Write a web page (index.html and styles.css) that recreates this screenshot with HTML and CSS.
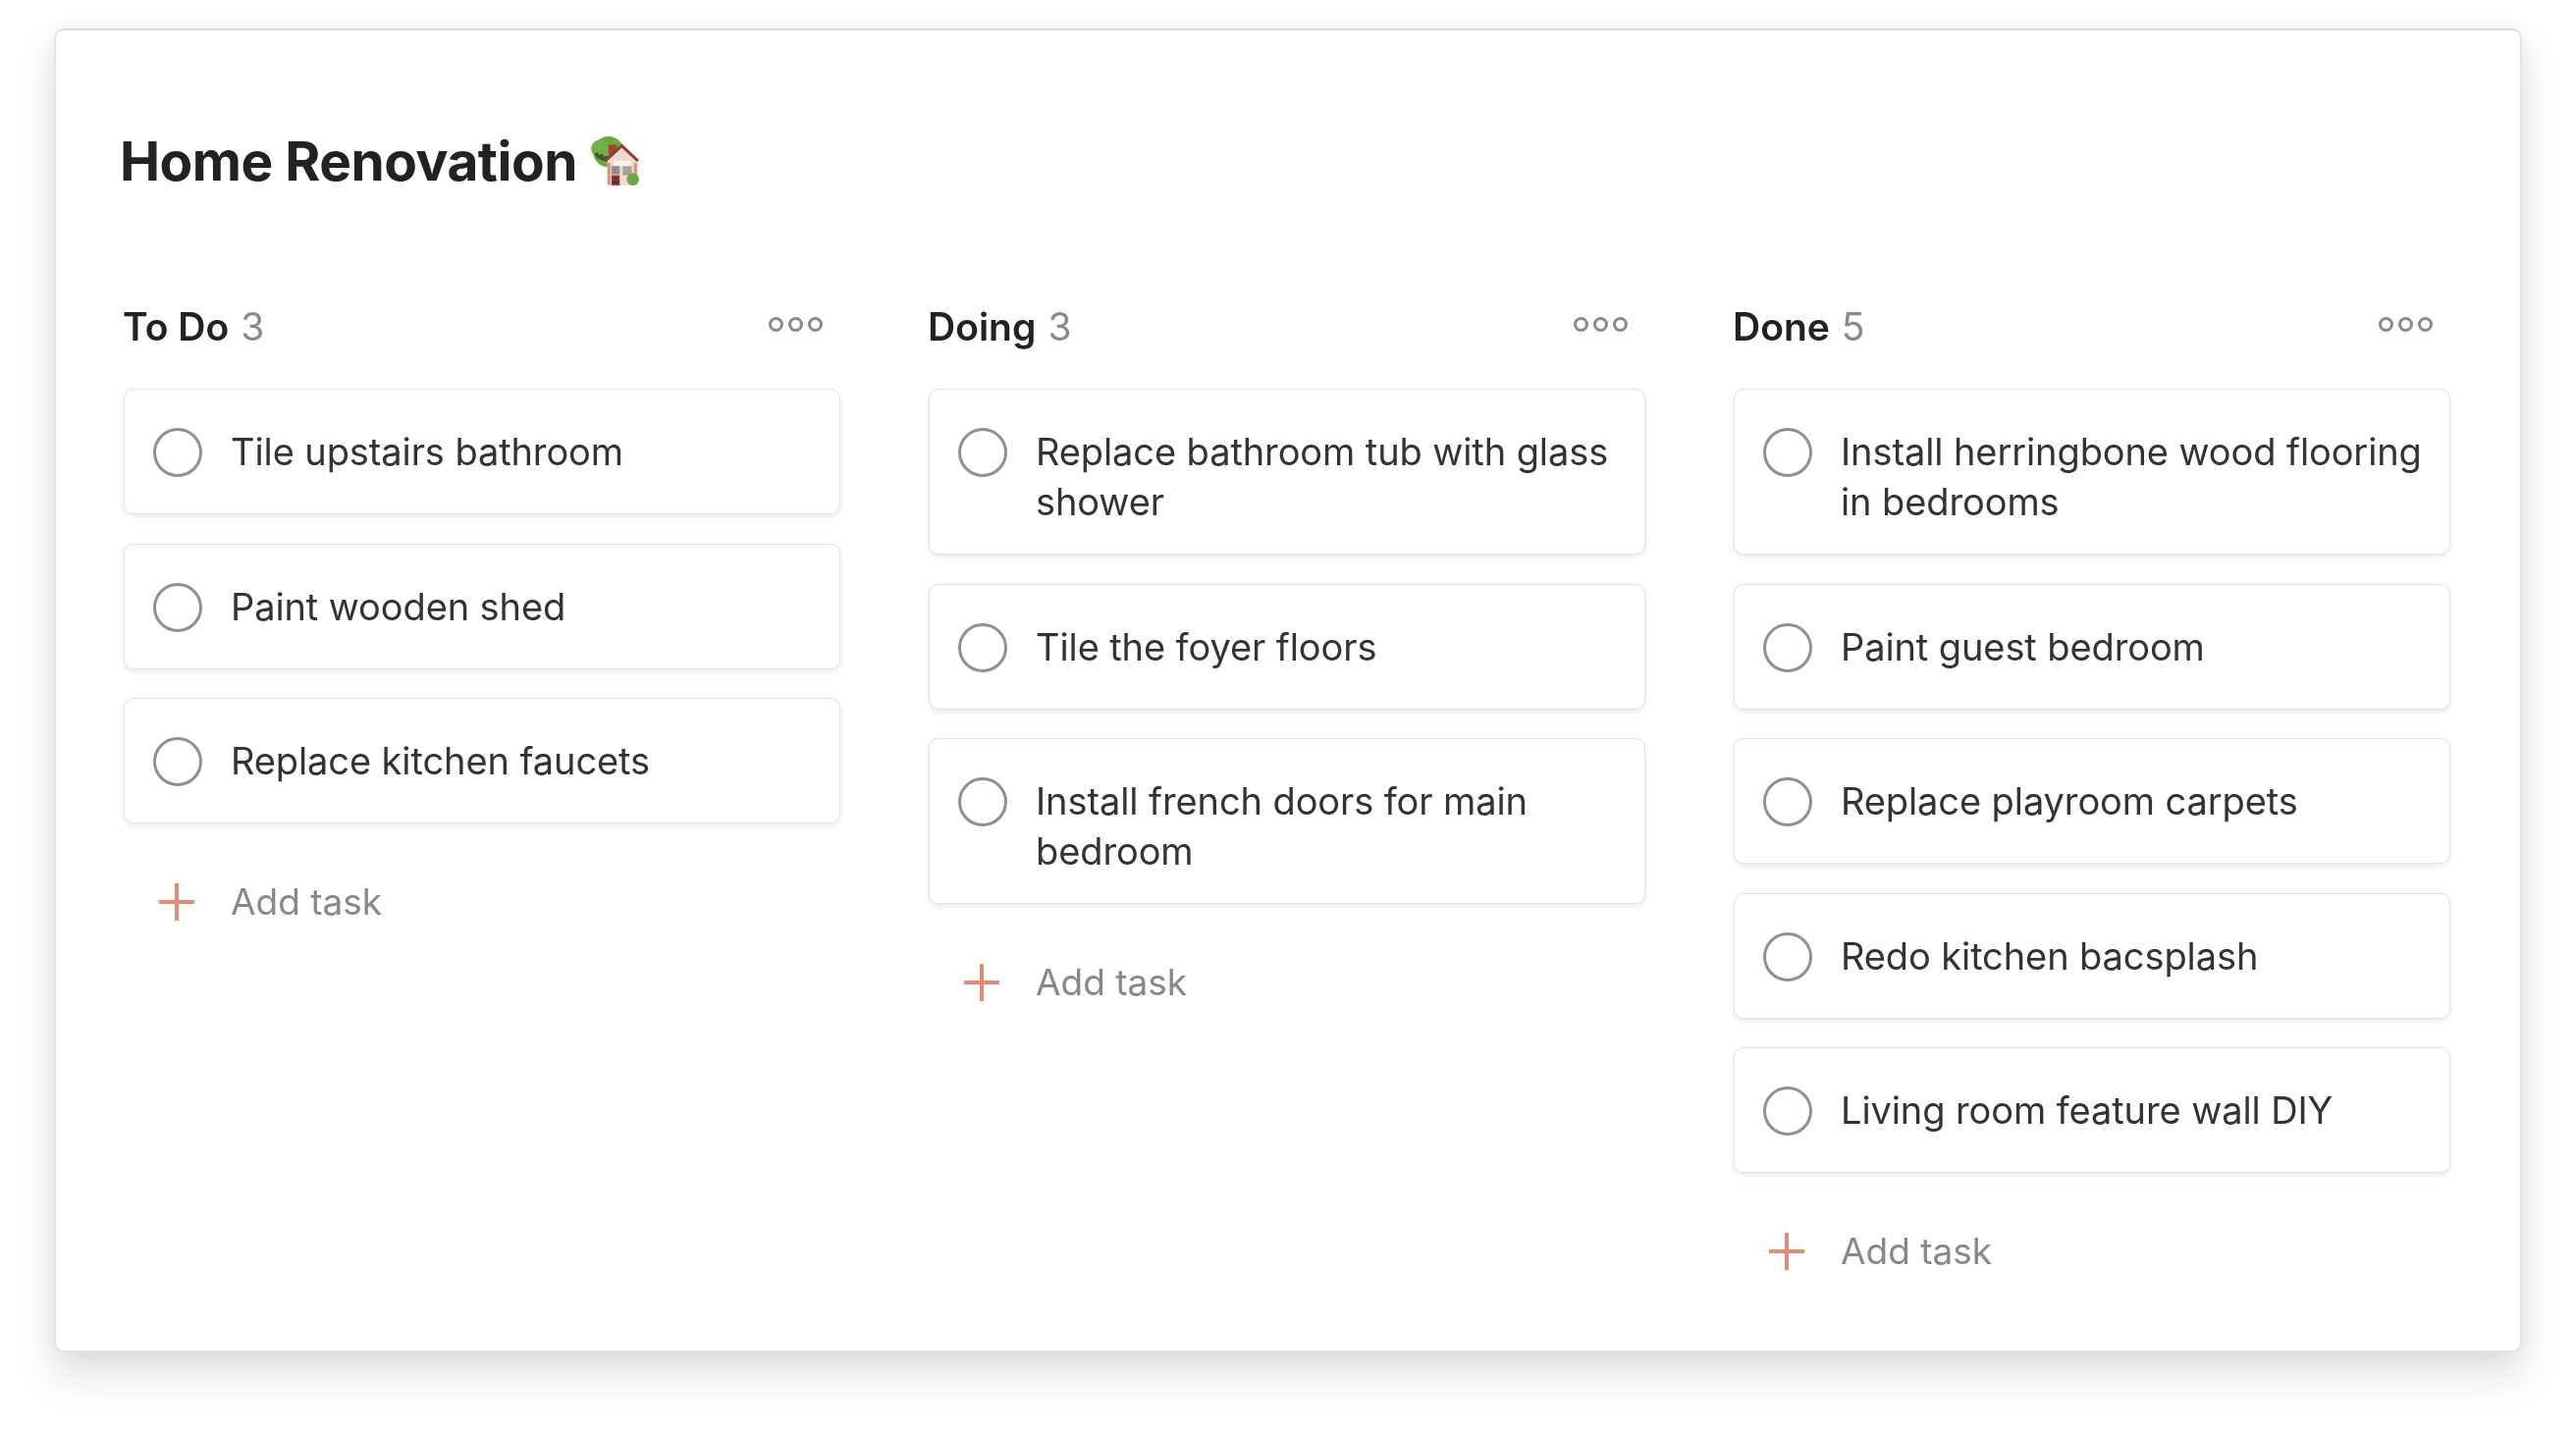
FILE: index.html
```html
<!DOCTYPE html>
<html>
  <head>
    <meta charset="UTF-8" />
    <title>Home Renovation</title>
    <link rel="stylesheet" href="styles.css">
  </head>
  <body>
    <div class="window">
      <h1 class="title">
        Home Renovation
        <svg class="emoji" viewBox="0 0 50 48" width="52" height="50">
          <circle cx="19" cy="15" r="15" fill="#6aa842" />
          <circle cx="11" cy="12" r="9" fill="#74b04a" />
          <path d="M5 17l3-2 2 3 3-1 2 3 3-1 1 4-5 1-6-3z" fill="#3d5a2c" />
          <rect x="19" y="8" width="8" height="9" fill="#a8452f" />
          <path d="M18 22L32 9l15 14v25H18z" fill="#f3d9cf" />
          <path d="M24 24h17v5H24z" fill="#fbf1ec" />
          <path d="M15 23L32 7l17 16-2 2L32 11 17 25z" fill="#8c3f30" />
          <rect x="18" y="26" width="3" height="21" fill="#e58f76" />
          <rect x="44" y="26" width="3" height="18" fill="#e58f76" />
          <rect x="22" y="29" width="8" height="8" fill="#8f8f8f" />
          <rect x="33" y="29" width="9" height="9" fill="#a3a3a3" />
          <rect x="22" y="38" width="8" height="10" fill="#8c3a2c" />
          <path d="M24 40h4v2h-4zM23 44h6v2h-6z" fill="#3a3a3a" />
          <circle cx="43" cy="42" r="6" fill="#6aa842" />
        </svg>
      </h1>
      <div class="board">
        <div class="column">
          <div class="column-head">
            <span class="column-name">To Do</span>
            <span class="column-count">3</span>
            <span class="more"><i></i><i></i><i></i></span>
          </div>
          <div class="tasks">
            <div class="task"><span class="check"></span><span class="task-text">Tile upstairs bathroom</span></div>
            <div class="task"><span class="check"></span><span class="task-text">Paint wooden shed</span></div>
            <div class="task"><span class="check"></span><span class="task-text">Replace kitchen faucets</span></div>
          </div>
          <div class="add-task"><span class="plus"></span>Add task</div>
        </div>
        <div class="column">
          <div class="column-head">
            <span class="column-name">Doing</span>
            <span class="column-count">3</span>
            <span class="more"><i></i><i></i><i></i></span>
          </div>
          <div class="tasks">
            <div class="task"><span class="check"></span><span class="task-text">Replace bathroom tub with glass shower</span></div>
            <div class="task"><span class="check"></span><span class="task-text">Tile the foyer floors</span></div>
            <div class="task"><span class="check"></span><span class="task-text">Install french doors for main bedroom</span></div>
          </div>
          <div class="add-task"><span class="plus"></span>Add task</div>
        </div>
        <div class="column">
          <div class="column-head">
            <span class="column-name">Done</span>
            <span class="column-count">5</span>
            <span class="more"><i></i><i></i><i></i></span>
          </div>
          <div class="tasks">
            <div class="task"><span class="check"></span><span class="task-text">Install herringbone wood flooring in bedrooms</span></div>
            <div class="task"><span class="check"></span><span class="task-text">Paint guest bedroom</span></div>
            <div class="task"><span class="check"></span><span class="task-text">Replace playroom carpets</span></div>
            <div class="task"><span class="check"></span><span class="task-text">Redo kitchen bacsplash</span></div>
            <div class="task"><span class="check"></span><span class="task-text">Living room feature wall DIY</span></div>
          </div>
          <div class="add-task"><span class="plus"></span>Add task</div>
        </div>
      </div>
    </div>
  </body>
</html>
```

FILE: styles.css
```css
* {
  box-sizing: border-box;
  font-family: Inter, "Liberation Sans", sans-serif;
}

body {
  height: 1458px;
  margin: 0;
  padding: 29px 55px 0;
  background-color: #fff;
}

.window {
  width: 2514px;
  height: 1349px;
  padding: 100px 0 0 68px;
  background-color: #fff;
  border: 2px solid #e2e2e2;
  border-top-color: #dcdcdc;
  border-radius: 10px;
  box-shadow: 0 24px 44px rgba(0, 0, 0, 0.12), 0 0 24px rgba(0, 0, 0, 0.06);
}

.title {
  display: flex;
  align-items: center;
  gap: 12px;
  height: 66px;
  margin: 0 0 110px -3px;
  font-size: 55px;
  font-weight: 700;
  letter-spacing: -0.5px;
  color: #222;
  filter: blur(0.6px);
}

.board {
  display: grid;
  grid-template-columns: repeat(3, 731px);
  gap: 89px;
  filter: blur(0.6px);
}

.column-head {
  display: flex;
  align-items: center;
  gap: 12px;
  height: 50px;
  margin-bottom: 39px;
  font-size: 39px;
}

.column-name {
  font-weight: 600;
  color: #222;
}

.column-count {
  color: #8a8a8a;
}

.more {
  display: flex;
  gap: 5px;
  margin: -4px 18px 0 auto;
}

.more i {
  width: 15px;
  height: 15px;
  border: 3px solid #8a8a8a;
  border-radius: 50%;
}

.tasks {
  display: flex;
  flex-direction: column;
  gap: 29.6px;
  margin-left: 1px;
}

.task {
  display: flex;
  gap: 29px;
  min-height: 128px;
  padding: 38px 14px 27px 29px;
  background-color: #fff;
  border: 1px solid #e2e2e2;
  border-radius: 10px;
  box-shadow: 0 2px 6px rgba(0, 0, 0, 0.1);
  font-size: 38px;
  line-height: 51px;
  letter-spacing: -0.1px;
  color: #333;
}

.check {
  flex: none;
  width: 50px;
  height: 50px;
  margin-top: 1px;
  border: 3px solid #909090;
  border-radius: 50%;
}

.add-task {
  display: flex;
  align-items: center;
  gap: 37px;
  height: 51px;
  margin: 54px 0 0 37px;
  font-size: 37px;
  color: #888;
}

.plus {
  position: relative;
  flex: none;
  width: 36px;
  height: 38px;
}

.plus::before,
.plus::after {
  content: "";
  position: absolute;
  background-color: #e58a73;
}

.plus::before {
  left: 0;
  right: 0;
  top: 17px;
  height: 4px;
}

.plus::after {
  top: 0;
  bottom: 0;
  left: 16px;
  width: 4px;
}
```
